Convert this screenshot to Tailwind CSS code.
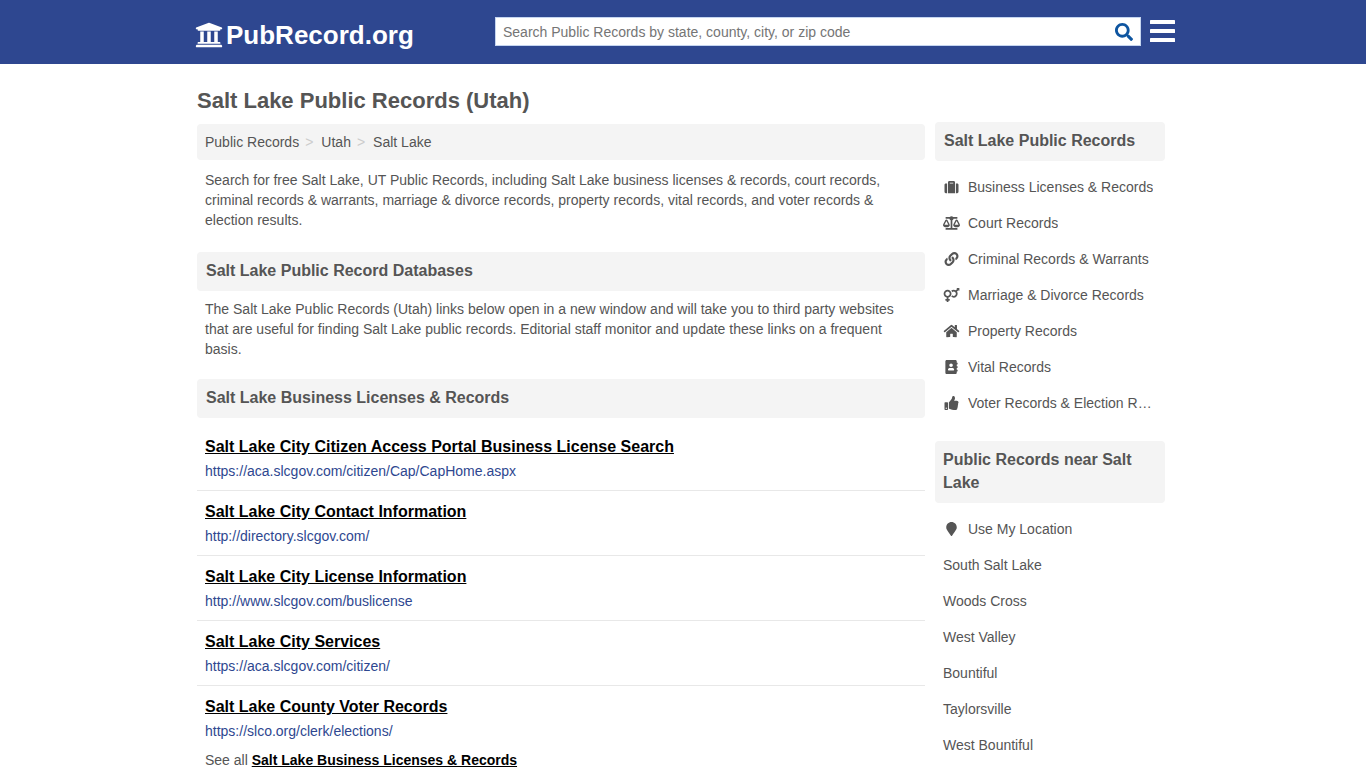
<!DOCTYPE html>
<html lang="en">
<head>
<meta charset="utf-8">
<meta name="viewport" content="width=device-width, initial-scale=1">
<title>Salt Lake Public Records (Utah)</title>
<script src="https://cdn.jsdelivr.net/npm/@tailwindcss/browser@4"></script>
</head>
<body class="bg-white font-['Liberation_Sans',Arial,sans-serif] text-sm leading-5 text-[#555555]">
<header class="bg-[#2e4790]">
  <div class="mx-auto flex h-16 max-w-[984px] items-center pb-0.5 pl-1">
    <a href="#" class="flex w-[300px] shrink-0 items-center gap-[3px] pt-2 text-[26px] leading-8 font-bold text-white">
      <svg class="size-7 shrink-0" viewBox="0 0 512 512" fill="currentColor" aria-hidden="true"><path d="M496 128v16a8 8 0 0 1-8 8h-24v12c0 6.627-5.373 12-12 12H60c-6.627 0-12-5.373-12-12v-12H24a8 8 0 0 1-8-8v-16a8 8 0 0 1 4.941-7.392l232-88a7.996 7.996 0 0 1 6.118 0l232 88A8 8 0 0 1 496 128zm-24 304H40c-13.255 0-24 10.745-24 24v16a8 8 0 0 0 8 8h464a8 8 0 0 0 8-8v-16c0-13.255-10.745-24-24-24zM96 192v192H60c-6.627 0-12 5.373-12 12v20h416v-20c0-6.627-5.373-12-12-12h-36V192h-64v192h-64V192h-64v192h-64V192H96z"/></svg>
      <span>PubRecord.org</span>
    </a>
    <form class="flex h-[29px] min-w-0 flex-1 items-center border border-[#c5d5f0] bg-white">
      <input type="text" aria-label="Search public records" placeholder="Search Public Records by state, county, city, or zip code" class="min-w-0 flex-1 pt-px pl-[7px] text-sm text-[#555555] outline-none placeholder:text-[#757575]">
      <button type="button" aria-label="Search" class="px-[7px] pt-px text-[#0e55a0]"><svg class="size-[18px]" viewBox="0 0 512 512" fill="currentColor" aria-hidden="true"><path d="M505 442.7L405.3 343c-4.5-4.5-10.6-7-17-7H372c27.6-35.3 44-79.7 44-128C416 93.1 322.9 0 208 0S0 93.1 0 208s93.1 208 208 208c48.3 0 92.7-16.4 128-44v16.3c0 6.4 2.5 12.5 7 17l99.7 99.7c9.4 9.4 24.6 9.4 33.9 0l28.3-28.3c9.4-9.4 9.4-24.6.1-34zM208 336c-70.7 0-128-57.2-128-128s57.2-128 128-128 128 57.2 128 128-57.2 128-128 128z"/></svg></button>
    </form>
    <button type="button" aria-label="Menu" class="ml-[9px] pb-px text-white"><svg class="h-[22px] w-[25px]" viewBox="0 0 25 22" fill="currentColor" aria-hidden="true"><rect width="25" height="4" rx=".6"/><rect y="9" width="25" height="4" rx=".6"/><rect y="18" width="25" height="4" rx=".6"/></svg></button>
  </div>
</header>

<div class="mx-auto max-w-[972px] pr-1">
  <h1 class="pt-[23px] text-[22px] leading-7 font-bold">Salt Lake Public Records (Utah)</h1>
  <div class="flex items-start gap-2.5 pt-[7px]">
    <main class="mt-0.5 min-w-0 flex-1">
      <nav aria-label="Breadcrumb" class="rounded bg-[#f4f4f4] p-2">
        <ol class="flex">
          <li><a href="#">Public Records</a><span class="pr-2 pl-1.5 text-[#cccccc]">&gt;</span></li>
          <li><a href="#">Utah</a><span class="pr-2 pl-1.5 text-[#cccccc]">&gt;</span></li>
          <li><a href="#">Salt Lake</a></li>
        </ol>
      </nav>
      <p class="px-2 pt-2.5">Search for free Salt Lake, UT Public Records, including Salt Lake business licenses &amp; records, court records, criminal records &amp; warrants, marriage &amp; divorce records, property records, vital records, and voter records &amp; election results.</p>
      <h2 class="mt-[22px] rounded bg-[#f4f4f4] px-[9px] pt-[7px] pb-2 text-base leading-6 font-bold">Salt Lake Public Record Databases</h2>
      <p class="px-2 pt-2">The Salt Lake Public Records (Utah) links below open in a new window and will take you to third party websites that are useful for finding Salt Lake public records. Editorial staff monitor and update these links on a frequent basis.</p>
      <h2 class="mt-5 rounded bg-[#f4f4f4] px-[9px] pt-[7px] pb-2 text-base leading-6 font-bold">Salt Lake Business Licenses &amp; Records</h2>
      <ul class="mt-2">
        <li class="border-b border-[#e8e8e8] px-2 py-[9px]"><a href="#" class="block text-base leading-6 font-bold text-black underline">Salt Lake City Citizen Access Portal Business License Search</a><span class="block pt-0.5 text-[#2e4790]">https://aca.slcgov.com/citizen/Cap/CapHome.aspx</span></li>
        <li class="border-b border-[#e8e8e8] px-2 py-[9px]"><a href="#" class="block text-base leading-6 font-bold text-black underline">Salt Lake City Contact Information</a><span class="block pt-0.5 text-[#2e4790]">http://directory.slcgov.com/</span></li>
        <li class="border-b border-[#e8e8e8] px-2 py-[9px]"><a href="#" class="block text-base leading-6 font-bold text-black underline">Salt Lake City License Information</a><span class="block pt-0.5 text-[#2e4790]">http://www.slcgov.com/buslicense</span></li>
        <li class="border-b border-[#e8e8e8] px-2 py-[9px]"><a href="#" class="block text-base leading-6 font-bold text-black underline">Salt Lake City Services</a><span class="block pt-0.5 text-[#2e4790]">https://aca.slcgov.com/citizen/</span></li>
        <li class="px-2 py-[9px]"><a href="#" class="block text-base leading-6 font-bold text-black underline">Salt Lake County Voter Records</a><span class="block pt-0.5 text-[#2e4790]">https://slco.org/clerk/elections/</span></li>
      </ul>
      <p class="px-2">See all <a href="#" class="font-bold text-black underline">Salt Lake Business Licenses &amp; Records</a></p>
    </main>

    <aside class="w-[230px] shrink-0">
      <h2 class="rounded bg-[#f4f4f4] px-[9px] pt-[7px] pb-2 text-base leading-6 font-bold">Salt Lake Public Records</h2>
      <ul class="mt-2">
        <li><a href="#" class="flex items-center gap-2 px-2 py-2"><svg class="h-3.5 w-[17px] shrink-0" viewBox="0 0 512 512" fill="currentColor" aria-hidden="true"><path d="M128 480h256V80c0-26.5-21.5-48-48-48H176c-26.5 0-48 21.5-48 48v400zm64-384h128v32H192V96zm320 80v256c0 26.5-21.5 48-48 48h-48V128h48c26.5 0 48 21.5 48 48zM96 480H48c-26.5 0-48-21.5-48-48V176c0-26.5 21.5-48 48-48h48v352z"/></svg><span class="truncate">Business Licenses &amp; Records</span></a></li>
        <li><a href="#" class="flex items-center gap-2 px-2 py-2"><svg class="h-3.5 w-[17px] shrink-0" viewBox="0 0 640 512" fill="currentColor" aria-hidden="true"><path d="M256 336h-.02c0-16.18 1.34-8.73-85.05-181.51-17.65-35.29-68.19-35.36-85.87 0C-2.06 328.75.02 320.33.02 336H0c0 44.18 57.31 80 128 80s128-35.82 128-80zM128 176l72 144H56l72-144zm511.98 160c0-16.18 1.34-8.73-85.05-181.51-17.65-35.29-68.19-35.36-85.87 0-87.12 174.26-85.04 165.84-85.04 181.51H384c0 44.18 57.31 80 128 80s128-35.82 128-80h-.02zM440 320l72-144 72 144H440zm88 128H352V153.25c23.51-10.29 41.16-31.48 46.39-57.25H528c8.84 0 16-7.16 16-16V48c0-8.84-7.16-16-16-16H383.64C369.04 12.68 346.09 0 320 0s-49.04 12.68-63.64 32H112c-8.84 0-16 7.16-16 16v32c0 8.84 7.16 16 16 16h129.61c5.23 25.76 22.87 46.96 46.39 57.25V448H112c-8.84 0-16 7.16-16 16v32c0 8.84 7.16 16 16 16h416c8.84 0 16-7.16 16-16v-32c0-8.84-7.16-16-16-16z"/></svg><span class="truncate">Court Records</span></a></li>
        <li><a href="#" class="flex items-center gap-2 px-2 py-2"><svg class="h-3.5 w-[17px] shrink-0" viewBox="0 0 512 512" fill="currentColor" aria-hidden="true"><path d="M326.612 185.391c59.747 59.809 58.927 155.698.36 214.59-.11.12-.24.25-.36.37l-67.2 67.2c-59.27 59.27-155.699 59.262-214.96 0-59.27-59.26-59.27-155.7 0-214.96l37.106-37.106c9.84-9.84 26.786-3.3 27.294 10.606.648 17.722 3.826 35.527 9.69 52.721 1.986 5.822.567 12.262-3.783 16.612l-13.087 13.087c-28.026 28.026-28.905 73.66-1.155 101.96 28.024 28.579 74.086 28.749 102.325.51l67.2-67.19c28.191-28.191 28.073-73.757 0-101.83-3.701-3.694-7.429-6.564-10.341-8.569a16.037 16.037 0 0 1-6.947-12.606c-.396-10.567 3.348-21.456 11.698-29.806l21.054-21.055c5.521-5.521 14.182-6.199 20.584-1.731a152.482 152.482 0 0 1 20.522 17.197zM467.547 44.449c-59.261-59.262-155.69-59.27-214.96 0l-67.2 67.2c-.12.12-.25.25-.36.37-58.566 58.892-59.387 154.781.36 214.59a152.454 152.454 0 0 0 20.521 17.196c6.402 4.468 15.064 3.789 20.584-1.731l21.054-21.055c8.35-8.35 12.094-19.239 11.698-29.806a16.037 16.037 0 0 0-6.947-12.606c-2.912-2.005-6.64-4.875-10.341-8.569-28.073-28.073-28.191-73.639 0-101.83l67.2-67.19c28.239-28.239 74.3-28.069 102.325.51 27.75 28.3 26.872 73.934-1.155 101.96l-13.087 13.087c-4.35 4.35-5.769 10.79-3.783 16.612 5.864 17.194 9.042 34.999 9.69 52.721.509 13.906 17.454 20.446 27.294 10.606l37.106-37.106c59.271-59.259 59.271-155.699.001-214.959z"/></svg><span class="truncate">Criminal Records &amp; Warrants</span></a></li>
        <li><a href="#" class="flex items-center gap-2 px-2 py-2"><svg class="h-3.5 w-[17px] shrink-0" viewBox="0 0 576 512" fill="currentColor" aria-hidden="true"><path d="M564 0h-79c-10.7 0-16 12.9-8.5 20.5l16.9 16.9-48.7 48.7C422.5 72.1 396.2 64 368 64c-33.7 0-64.6 11.6-89.2 30.9 14 16.7 25 36 32.1 57.1 14.5-14.8 34.7-24 57.1-24 44.1 0 80 35.9 80 80s-35.9 80-80 80c-22.3 0-42.6-9.2-57.1-24-7.1 21.1-18 40.4-32.1 57.1 24.5 19.4 55.5 30.9 89.2 30.9 79.5 0 144-64.5 144-144 0-28.2-8.1-54.5-22.1-76.7l48.7-48.7 16.9 16.9c2.4 2.4 5.4 3.5 8.4 3.5 6.2 0 12.1-4.8 12.1-12V12c0-6.6-5.4-12-12-12zM144 64C64.5 64 0 128.5 0 208c0 68.5 47.9 125.9 112 140.4V400H76c-6.6 0-12 5.4-12 12v40c0 6.6 5.4 12 12 12h36v36c0 6.6 5.4 12 12 12h40c6.6 0 12-5.4 12-12v-36h36c6.6 0 12-5.4 12-12v-40c0-6.6-5.4-12-12-12h-36v-51.6c64.1-14.6 112-71.9 112-140.4 0-79.5-64.5-144-144-144zm0 224c-44.1 0-80-35.9-80-80s35.9-80 80-80 80 35.9 80 80-35.9 80-80 80z"/></svg><span class="truncate">Marriage &amp; Divorce Records</span></a></li>
        <li><a href="#" class="flex items-center gap-2 px-2 py-2"><svg class="h-3.5 w-[17px] shrink-0" viewBox="0 0 576 512" fill="currentColor" aria-hidden="true"><path d="M280.37 148.26L96 300.11V464a16 16 0 0 0 16 16l112.06-.29a16 16 0 0 0 15.92-16V368a16 16 0 0 1 16-16h64a16 16 0 0 1 16 16v95.64a16 16 0 0 0 16 16.05L464 480a16 16 0 0 0 16-16V300L295.67 148.26a12.19 12.19 0 0 0-15.3 0zM571.6 251.47L488 182.56V44.05a12 12 0 0 0-12-12h-56a12 12 0 0 0-12 12v72.61L318.47 43a48 48 0 0 0-61 0L4.34 251.47a12 12 0 0 0-1.6 16.9l25.5 31A12 12 0 0 0 45.15 301l235.22-193.74a12.19 12.19 0 0 1 15.3 0L530.9 301a12 12 0 0 0 16.9-1.6l25.5-31a12 12 0 0 0-1.7-16.93z"/></svg><span class="truncate">Property Records</span></a></li>
        <li><a href="#" class="flex items-center gap-2 px-2 py-2"><svg class="h-3.5 w-[17px] shrink-0" viewBox="0 0 448 512" fill="currentColor" aria-hidden="true"><path d="M436 160c6.6 0 12-5.4 12-12v-40c0-6.6-5.4-12-12-12h-20V48c0-26.5-21.5-48-48-48H48C21.5 0 0 21.5 0 48v416c0 26.5 21.5 48 48 48h320c26.5 0 48-21.5 48-48v-48h20c6.6 0 12-5.4 12-12v-40c0-6.6-5.4-12-12-12h-20v-64h20c6.6 0 12-5.4 12-12v-40c0-6.6-5.4-12-12-12h-20v-64h20zm-228-32c35.3 0 64 28.7 64 64s-28.7 64-64 64-64-28.7-64-64 28.7-64 64-64zm112 236.8c0 10.6-10 19.2-22.4 19.2H118.4C106 384 96 375.4 96 364.8v-19.2c0-31.8 30.1-57.6 67.2-57.6h5c12.3 5.1 25.7 8 39.8 8s27.6-2.9 39.8-8h5c37.1 0 67.2 25.8 67.2 57.6v19.2z"/></svg><span class="truncate">Vital Records</span></a></li>
        <li><a href="#" class="flex items-center gap-2 px-2 py-2"><svg class="h-3.5 w-[17px] shrink-0" viewBox="0 0 512 512" fill="currentColor" aria-hidden="true"><path d="M104 224H24c-13.255 0-24 10.745-24 24v240c0 13.255 10.745 24 24 24h80c13.255 0 24-10.745 24-24V248c0-13.255-10.745-24-24-24zM64 472c-13.255 0-24-10.745-24-24s10.745-24 24-24 24 10.745 24 24-10.745 24-24 24zM384 81.452c0 42.416-25.97 66.208-33.277 94.548h101.723c33.397 0 59.397 27.746 59.553 58.098.084 17.938-7.546 37.249-19.439 49.197l-.11.11c9.836 23.337 8.237 56.037-9.308 79.469 8.681 25.895-.069 57.704-16.382 74.757 4.298 17.598 2.244 32.575-6.148 44.632C440.202 511.587 389.616 512 346.839 512l-2.845-.001c-48.287-.017-87.806-17.598-119.56-31.725-15.957-7.099-36.821-15.887-52.651-16.178-6.54-.12-11.783-5.457-11.783-11.998v-213.77c0-3.2 1.282-6.271 3.558-8.521 39.614-39.144 56.648-80.587 89.117-113.111 14.804-14.832 20.188-37.236 25.393-58.902C282.515 39.293 291.817 0 312 0c24 0 72 8 72 81.452z"/></svg><span class="truncate">Voter Records &amp; Election Results</span></a></li>
      </ul>
      <h2 class="mt-5 rounded bg-[#f4f4f4] px-2 pt-[7px] pb-[9px] text-base leading-[23px] font-bold">Public Records near Salt Lake</h2>
      <ul class="mt-2">
        <li><a href="#" class="flex items-center gap-2 px-2 py-2"><svg class="h-3.5 w-[17px] shrink-0" viewBox="0 0 384 512" fill="currentColor" aria-hidden="true"><path d="M172.268 501.67C26.97 291.031 0 269.413 0 192 0 85.961 85.961 0 192 0s192 85.961 192 192c0 77.413-26.97 99.031-172.268 309.67-9.535 13.774-29.93 13.773-39.464 0z"/></svg><span class="truncate">Use My Location</span></a></li>
        <li><a href="#" class="block p-2">South Salt Lake</a></li>
        <li><a href="#" class="block p-2">Woods Cross</a></li>
        <li><a href="#" class="block p-2">West Valley</a></li>
        <li><a href="#" class="block p-2">Bountiful</a></li>
        <li><a href="#" class="block p-2">Taylorsville</a></li>
        <li><a href="#" class="block p-2">West Bountiful</a></li>
      </ul>
    </aside>
  </div>
</div>
</body>
</html>
